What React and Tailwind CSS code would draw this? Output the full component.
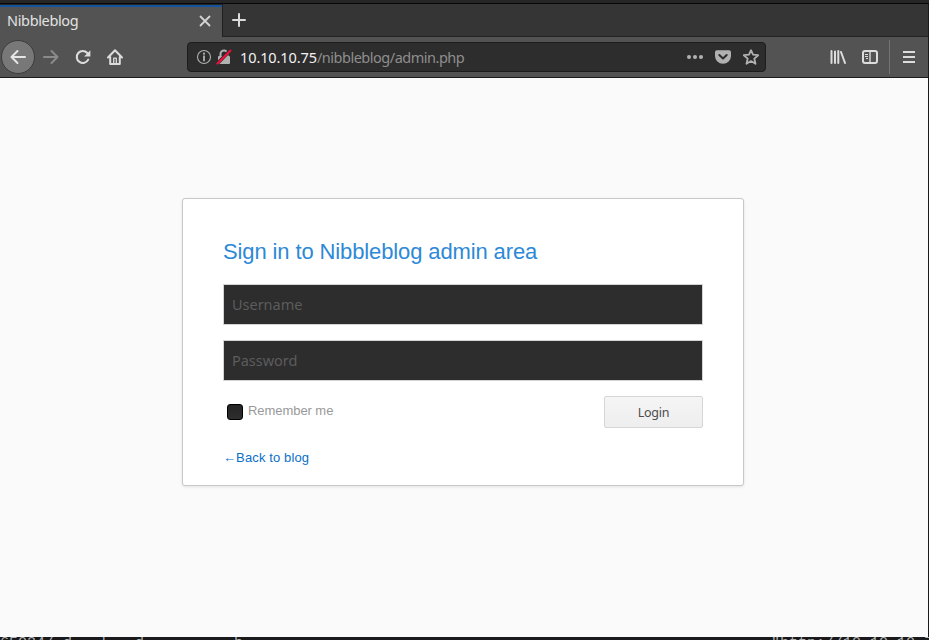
import React from "react";

const ui = "font-['Noto_Sans','Open_Sans',sans-serif]";

function BackIcon({ className }) {
  return (
    <svg className={className} width="16" height="16" viewBox="0 0 16 16" fill="none" stroke="currentColor" strokeWidth="2" strokeLinecap="round" strokeLinejoin="round">
      <path d="M15 8H1.5M7.5 2L1.5 8l6 6" />
    </svg>
  );
}

function ReloadIcon() {
  return (
    <svg width="16" height="16" viewBox="0 0 16 16">
      <path d="M13.2 10.6A6 6 0 1 1 12.3 4" fill="none" stroke="#dcdcdc" strokeWidth="2.1" strokeLinecap="round" />
      <path d="M15.4 1.2v6.3H9.1z" fill="#dcdcdc" />
    </svg>
  );
}

function HomeIcon() {
  return (
    <svg width="16" height="16" viewBox="0 0 16 16" fill="none" stroke="#dcdcdc" strokeWidth="2" strokeLinecap="round" strokeLinejoin="round">
      <path d="M1 8.500L8 1.300l7 7.200M3.200 8v7h9.600V8" />
      <path d="M6.700 14V9.200h2.600V14" strokeWidth="1.300" />
    </svg>
  );
}

function InfoIcon() {
  return (
    <svg width="16" height="16" viewBox="0 0 16 16">
      <circle cx="8" cy="8" r="6.5" fill="none" stroke="#b1b1b1" strokeWidth="1.1" />
      <path d="M8 7.2v4.3" stroke="#b1b1b1" strokeWidth="1.8" strokeLinecap="round" />
      <circle cx="8" cy="4.7" r="1.1" fill="#b1b1b1" />
    </svg>
  );
}

function InsecureIcon() {
  return (
    <svg width="16" height="16" viewBox="0 0 16 16">
      <path d="M4.500 8V5a3.500 3.500 0 0 1 7 0v3" fill="none" stroke="#b1b1b1" strokeWidth="2" />
      <rect x="2" y="7" width="12" height="8" rx="1" fill="#b1b1b1" />
      <path d="M.5 15.500L14 1.500" stroke="#2d2d2d" strokeWidth="3.400" />
      <path d="M1.500 14.500L14.300 1.700" stroke="#f0103c" strokeWidth="2.200" strokeLinecap="round" />
    </svg>
  );
}

function PocketIcon() {
  return (
    <svg width="16" height="16" viewBox="0 0 16 16">
      <path d="M2 1.200h12a2 2 0 0 1 2 2V7a8 7.800 0 0 1-16 0V3.200a2 2 0 0 1 2-2z" fill="#b1b1b1" />
      <path d="M4.300 6L8 9.500 11.700 6" fill="none" stroke="#2d2d2d" strokeWidth="2" strokeLinecap="round" strokeLinejoin="round" />
    </svg>
  );
}

function StarIcon() {
  return (
    <svg width="16" height="16" viewBox="0 0 16 16">
      <path d="M8 1.200l2 4.500 5.200.5-3.900 3.400 1.200 5.200L8 12.100l-4.500 2.700 1.200-5.200L.8 6.200l5.200-.5z" fill="none" stroke="#b1b1b1" strokeWidth="1.800" strokeLinejoin="round" />
    </svg>
  );
}

function LibraryIcon() {
  return (
    <svg width="16" height="16" viewBox="0 0 16 16" fill="none" stroke="#dcdcdc" strokeWidth="2" strokeLinecap="round">
      <path d="M1.500 2v12M5 2.500V14M8.300 2v12M11 3l4 11" />
    </svg>
  );
}

function SidebarIcon() {
  return (
    <svg width="16" height="16" viewBox="0 0 16 16" fill="none" stroke="#dcdcdc">
      <rect x="1" y="2" width="14" height="12" rx="2" strokeWidth="2" />
      <path d="M8 2.500v11" strokeWidth="1.400" />
      <path d="M3 5.500h3M3 7.500h3M4 9.500h2" strokeWidth="1" />
    </svg>
  );
}

function TabStrip() {
  return (
    <div className="flex h-8 bg-[#353535]">
      <div className="flex w-[222px] flex-col bg-[#535353]">
        <div className="h-px bg-[#252525]" />
        <div className="h-0.5 bg-[#15539e]" />
        <div className="flex flex-1 items-center justify-between pr-[11px] pl-[7px]">
          <span className="-mt-0.5 text-[14.5px] leading-none tracking-[-0.35px] text-[#e2e2e2]">Nibbleblog</span>
          <svg className="-mt-px" width="12" height="12" viewBox="0 0 12 12" stroke="#d4d4d4" strokeWidth="1.800" strokeLinecap="round">
            <path d="M1.500 1.500l9 9M10.500 1.500l-9 9" />
          </svg>
        </div>
      </div>
      <div className="flex items-center border-l border-[#1f1f1f] pl-2">
        <svg width="16" height="16" viewBox="0 0 16 16" stroke="#dcdcdc" strokeWidth="2" strokeLinecap="round">
          <path d="M8 2v12M2 8h12" />
        </svg>
      </div>
    </div>
  );
}

function Toolbar() {
  return (
    <div className="flex h-[41px] border-b border-[#1b1b1b] bg-[#535353]">
      <div className="flex h-10 w-[187px] items-center pl-[1px]">
        <div className="flex size-[34px] items-center justify-center rounded-full border border-[#3c3c3c] bg-[#787878] text-[#e6e6e6]">
          <BackIcon />
        </div>
        <div className="ml-2 text-[#8b8b8b]">
          <BackIcon className="rotate-180" />
        </div>
        <div className="ml-4"><ReloadIcon /></div>
        <div className="ml-4"><HomeIcon /></div>
      </div>
      <div className="mt-[5px] flex h-[30px] w-[579px] items-center rounded border border-[#1c1c1c] bg-[#2d2d2d] pr-[6px] pl-2">
        <InfoIcon />
        <div className="ml-1"><InsecureIcon /></div>
        <span className="mt-px ml-2 flex-1 text-[14.5px] leading-none tracking-[-0.49px] text-[#8e8e8e]">
          <span className="tracking-[-0.1px] text-[#f2f2f2]">10.10.10.75</span>/nibbleblog/admin.php
        </span>
        <svg width="16" height="16" viewBox="0 0 16 16" fill="#b1b1b1">
          <circle cx="2" cy="8" r="2" />
          <circle cx="8" cy="8" r="2" />
          <circle cx="14" cy="8" r="2" />
        </svg>
        <div className="ml-3"><PocketIcon /></div>
        <div className="ml-3"><StarIcon /></div>
      </div>
      <div className="ml-auto flex h-10 items-center">
        <LibraryIcon />
        <div className="ml-4"><SidebarIcon /></div>
        <div className="ml-[11px] h-[34px] w-px bg-[#747474]" />
        <svg className="mr-[11px] ml-[11px]" width="16" height="16" viewBox="0 0 16 16" fill="#dcdcdc">
          <path d="M2 2h12v2H2zM2 7h12v2H2zM2 12h12v2H2z" />
        </svg>
      </div>
    </div>
  );
}

function Field({ label }) {
  return (
    <div className="flex h-[41px] items-center border border-[#d4d4d4] bg-[#2d2d2d] px-2 text-[14.5px] tracking-[-0.03px] text-[#5c5c5c]">
      {label}
    </div>
  );
}

function LoginCard() {
  return (
    <div className="mt-[120px] ml-[182px] h-[288px] w-[562px] rounded-[3px] border border-[#c8c8c8] bg-white px-10 shadow-[0_1px_3px_rgba(0,0,0,0.1)]">
      <h1 className="mt-10 h-[45px] font-['Liberation_Sans',sans-serif] text-[22px] leading-[26px] tracking-[-0.12px] text-[#2d89d6]">
        Sign in to Nibbleblog admin area
      </h1>
      <div className="flex flex-col gap-[15px]">
        <Field label="Username" />
        <Field label="Password" />
      </div>
      <div className="mt-[15px] flex justify-between">
        <div className="mt-[8px] ml-1 flex h-4 items-center font-['Liberation_Sans',sans-serif] text-[13px] tracking-[-0.06px] text-[#999]">
          <span className="mr-[5px] size-4 rounded-[3px] border border-black bg-linear-to-b from-[#242424] to-[#2e2e2e]" />
          <span className="-mt-0.5">Remember me</span>
        </div>
        <button className="h-8 w-[99px] rounded-[2px] border border-[#d6d6d6] bg-linear-to-b from-[#f5f5f5] to-[#eeeeee] pt-[3px] text-[12.5px] tracking-[-0.3px] text-[#4c4c4c]">
          Login
        </button>
      </div>
      <div className="mt-5 font-['Liberation_Sans',sans-serif] text-[13px] leading-5 tracking-[0.12px] text-[#0b70c7]">←Back to blog</div>
    </div>
  );
}

export default function App() {
  return (
    <div className={`h-[640px] w-[929px] overflow-hidden bg-[#1a1a1c] ${ui}`}>
      <div className="h-[3px] bg-[#262626]" />
      <div className="h-px bg-[#080808]" />
      <div className="h-[633px] w-[928px]">
        <TabStrip />
        <div className="flex h-px">
          <div className="w-[222px] bg-[#535353]" />
          <div className="flex-1 bg-[#232323]" />
        </div>
        <Toolbar />
        <div className="flex h-[559px] items-start bg-[#fafafa]">
          <LoginCard />
        </div>
      </div>
      <div className="flex h-[3px] justify-between overflow-hidden font-['Liberation_Mono',monospace] text-[15px] leading-[20px] whitespace-pre text-[#b5b5b5]">
        <span className="-mt-[3px]">65024/ d   l   d          b</span>
        <span className="-mt-[3px] -mr-1">"http://10.10.10.7</span>
      </div>
    </div>
  );
}
